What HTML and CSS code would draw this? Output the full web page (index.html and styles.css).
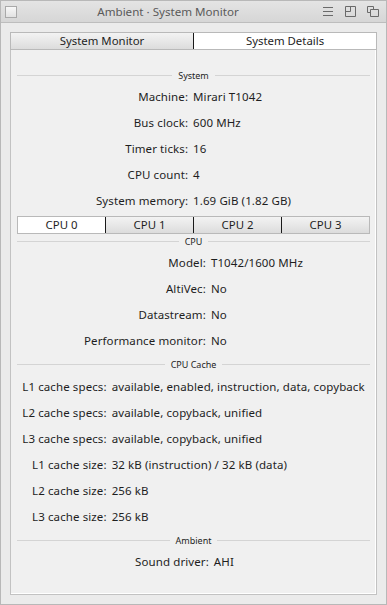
FILE: index.html
```html
<!DOCTYPE html>
<html>
<head>
<meta charset="utf-8">
<link rel="stylesheet" href="styles.css">
</head>
<body>
<div class="window">
  <div class="titlebar">
    <div class="closebox"></div>
    <div class="title">Ambient · System Monitor</div>
    <div class="tb-icons">
      <svg width="11" height="11" viewBox="0 0 11 11"><path d="M0 1.5H10M0 5.5H10M0 9.5H10" stroke="#6a6a6a" stroke-width="1" fill="none"/></svg>
      <svg width="11" height="11" viewBox="0 0 11 11"><path d="M0.5 0.5H10.5V10.5H0.5Z M0.5 5.5H5.5V0.5" stroke="#6a6a6a" stroke-width="1" fill="none"/></svg>
      <svg width="12" height="11" viewBox="0 0 12 11"><path d="M0.5 0.5H6.5V3.5 M0.5 0.5V6.5H3.5 M3.5 3.5H11.5V10.5H3.5Z" stroke="#6a6a6a" stroke-width="1" fill="none"/></svg>
    </div>
  </div>
  <div class="body">
    <div class="tabs main-tabs">
      <div class="tab">System Monitor</div>
      <div class="tab active">System Details</div>
    </div>
    <div class="panel">
      <div class="heading"><span>System</span></div>
      <div class="grid sys">
        <div class="l">Machine:</div><div class="v">Mirari T1042</div>
        <div class="l">Bus clock:</div><div class="v">600 MHz</div>
        <div class="l">Timer ticks:</div><div class="v">16</div>
        <div class="l">CPU count:</div><div class="v">4</div>
        <div class="l">System memory:</div><div class="v">1.69 GiB (1.82 GB)</div>
      </div>
      <div class="tabs cpu-tabs">
        <div class="tab active">CPU 0</div>
        <div class="tab">CPU 1</div>
        <div class="tab">CPU 2</div>
        <div class="tab">CPU 3</div>
      </div>
      <div class="heading h-cpu"><span>CPU</span></div>
      <div class="grid">
        <div class="l">Model:</div><div class="v">T1042/1600 MHz</div>
        <div class="l">AltiVec:</div><div class="v">No</div>
        <div class="l">Datastream:</div><div class="v">No</div>
        <div class="l">Performance monitor:</div><div class="v">No</div>
      </div>
      <div class="heading h-cache"><span>CPU Cache</span></div>
      <div class="grid">
        <div class="l">L1 cache specs:</div><div class="v">available, enabled, instruction, data, copyback</div>
        <div class="l">L2 cache specs:</div><div class="v">available, copyback, unified</div>
        <div class="l">L3 cache specs:</div><div class="v">available, copyback, unified</div>
        <div class="l">L1 cache size:</div><div class="v">32 kB (instruction) / 32 kB (data)</div>
        <div class="l">L2 cache size:</div><div class="v">256 kB</div>
        <div class="l">L3 cache size:</div><div class="v">256 kB</div>
      </div>
      <div class="heading h-amb"><span>Ambient</span></div>
      <div class="grid amb">
        <div class="l">Sound driver:</div><div class="v">AHI</div>
      </div>
    </div>
  </div>
</div>
</body>
</html>
```
FILE: styles.css
```css
* { box-sizing: border-box; }
html, body { margin: 0; padding: 0; }
body {
  width: 387px;
  height: 605px;
  font-family: "Noto Sans", "DejaVu Sans", sans-serif;
  font-size: 11.5px;
  letter-spacing: 0.1px;
  color: #1e1e1e;
  background: #ebebeb;
}
.window {
  width: 387px;
  height: 605px;
  border: 1px solid #b8b8b8;
  display: flex;
  flex-direction: column;
  background: #ebebeb;
}
.titlebar {
  height: 22px;
  flex: none;
  display: flex;
  align-items: center;
  padding: 0 7px 0 4px;
  background: linear-gradient(#e4e4e4, #d6d6d6);
  border-bottom: 1px solid #bdbdbd;
}
.closebox {
  width: 12px;
  height: 12px;
  border: 1px solid #a9a9a9;
  background: linear-gradient(#f8f8f8, #e2e2e2);
  flex: none;
}
.title {
  flex: 1;
  text-align: center;
  color: #5a5a5a;
  font-size: 11.6px;
  letter-spacing: 0;
  padding-right: 4px;
}
.tb-icons {
  display: flex;
  gap: 11px;
  align-items: center;
}
.tb-icons svg { display: block; }
.body {
  flex: 1;
  padding: 9px;
  display: flex;
  flex-direction: column;
}
.tabs {
  display: flex;
  border: 1px solid #b9b9b9;
  flex: none;
}
.tab {
  flex: 1;
  text-align: center;
  background: linear-gradient(#f3f3f3, #dcdcdc);
  border-left: 1px solid #1a1a1a;
  font-size: 11.4px;
  letter-spacing: 0;
}
.tab:first-child { border-left: none; }
.tab.active { background: #ffffff; }
.main-tabs { height: 18px; }
.main-tabs .tab { line-height: 16px; }
.panel {
  flex: 1;
  border: 1px solid #c2c2c2;
  border-top: none;
  background: #f0f0f0;
  padding: 17px 6px 0 6px;
  box-shadow: inset -1px -1px 0 #ffffff;
}
.heading {
  height: 16px;
  display: flex;
  align-items: center;
  font-size: 9px;
  letter-spacing: 0;
  gap: 6px;
}
.heading::before, .heading::after {
  content: "";
  flex: 1;
  height: 1px;
  background: #d4d4d4;
}
.h-cpu { margin-top: -1px; }
.h-cache { margin-top: 3px; margin-bottom: 1px; }
.h-amb { margin-top: 3px; }
.grid {
  display: grid;
  grid-template-columns: auto auto;
  justify-content: center;
  column-gap: 5px;
  grid-auto-rows: 26px;
  align-items: center;
}
.l { text-align: right; white-space: nowrap; }
.v { white-space: nowrap; }
.cpu-tabs {
  margin-top: 3px;
  height: 18px;
}
.cpu-tabs .tab { line-height: 16px; }
.amb { padding-right: 18px; }
```
